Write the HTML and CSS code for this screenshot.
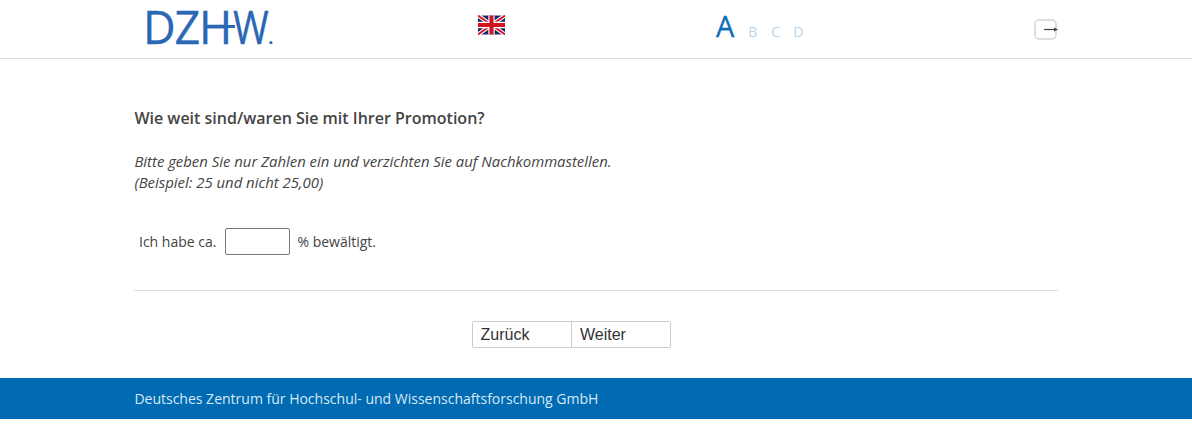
FILE: index.html
```html
<!DOCTYPE html>
<html lang="de">
<head>
<meta charset="utf-8">
<title>DZHW</title>
<link rel="stylesheet" href="styles.css">
</head>
<body>
<header class="header">
  <div class="wrap header-row">
    <div class="logo-box">
      <div class="logo" aria-label="DZHW">DZH<span class="logo-w">W</span><span class="logo-dot">.</span><span class="logo-bar"></span></div>
    </div>
    <svg class="flag" viewBox="0 0 60 42" width="27" height="20" aria-label="English">
      <rect width="60" height="42" fill="#17216a"/>
      <path d="M0 0L60 42M60 0L0 42" stroke="#fff" stroke-width="9"/>
      <path d="M0 0L60 42M60 0L0 42" stroke="#d3121f" stroke-width="4"/>
      <path d="M30 0V42M0 21H60" stroke="#fff" stroke-width="14"/>
      <path d="M30 0V42M0 21H60" stroke="#d3121f" stroke-width="9"/>
    </svg>
    <div class="steps">
      <span class="step-active">A</span>
      <span class="step">B</span>
      <span class="step">C</span>
      <span class="step">D</span>
    </div>
    <svg class="exit" viewBox="0 0 24 22" width="24" height="22" aria-label="Abmelden">
      <rect x="1" y="1" width="21" height="19" rx="4" fill="#fff" stroke="#d4d4d4" stroke-width="1.5"/>
      <path d="M10 10.5H21" stroke="#444" stroke-width="1.2"/>
      <path d="M20 8.5L24 10.5L20 12.5Z" fill="#444"/>
    </svg>
  </div>
</header>
<main class="wrap main">
  <h1 class="question">Wie weit sind/waren Sie mit Ihrer Promotion?</h1>
  <p class="hint">Bitte geben Sie nur Zahlen ein und verzichten Sie auf Nachkommastellen.<br>(Beispiel: 25 und nicht 25,00)</p>
  <div class="answer">
    <label for="pct">Ich habe ca.</label>
    <input id="pct" class="field" type="text">
    <span>% bewältigt.</span>
  </div>
  <hr class="rule">
  <div class="nav">
    <div class="btn-group">
      <button class="btn" type="button">Zurück</button>
      <button class="btn" type="button">Weiter</button>
    </div>
  </div>
</main>
<footer class="footer">
  <div class="wrap footer-text">Deutsches Zentrum für Hochschul- und Wissenschaftsforschung GmbH</div>
</footer>
</body>
</html>
```
FILE: styles.css
```css
* { box-sizing: border-box; }
html, body { margin: 0; padding: 0; background: #fff; }
body { font-family: "Open Sans", sans-serif; font-size: 14px; color: #444; }
.wrap { width: 924px; margin: 0 auto; }
.header { height: 59px; border-bottom: 1px solid #ddd; }
.header-row { display: flex; align-items: flex-start; height: 58px; }
.logo-box { width: 344px; padding-left: 9px; }
.logo {
  position: relative; display: inline-block;
  font-family: "Open Sans", sans-serif; font-weight: 400;
  font-size: 45px; line-height: 54px; letter-spacing: -1.2px;
  color: #2a67b5; white-space: nowrap; -webkit-text-stroke: 0.3px #2a67b5;
}
.logo-w { display: inline-block; margin-left: 2px; letter-spacing: 0; transform: scaleX(0.86); transform-origin: left; margin-right: -6px; }
.logo-dot { font-size: 16px; font-weight: 700; letter-spacing: 0; }
.logo-bar { position: absolute; left: 72px; top: 25px; width: 20px; height: 3px; background: #2a67b5; }
.flag { margin-top: 15px; display: block; }
.steps { margin-left: 211px; display: flex; align-items: baseline; gap: 15px; height: 58px; padding-top: 6px; color: #b9d5ea; font-size: 14px; }
.step-active { font-size: 29px; line-height: 40px; color: #0a6db7; margin-right: -1px; -webkit-text-stroke: 0.3px #0a6db7; }
.step { line-height: 40px; width: 8px; }
.step:last-child { margin-left: -1px; }
.exit { margin-left: auto; margin-top: 19px; margin-right: 0; display: block; }
.main { height: 319px; padding-top: 49px; }
.question { margin: 0; padding-left: 0.4px; font-size: 16px; line-height: 20px; font-weight: 600; color: #444; }
.hint { margin: 23px 0 0; padding-left: 0.4px; font-size: 14.88px; line-height: 21px; font-style: italic; color: #444; }
.answer { margin-top: 35px; padding-left: 5px; display: flex; align-items: center; height: 27px; }
.field { width: 65px; height: 27px; margin: 0 7px 0 9px; border: 1px solid #767676; border-radius: 2px; background: #fff; }
.rule { margin: 35px 0 0; border: 0; border-top: 1px solid #ddd; }
.nav { margin-top: 30px; padding-left: 338px; }
.btn-group { display: flex; width: 199px; height: 27px; border: 1px solid #ccc; border-radius: 2px; }
.btn {
  height: 25px; padding: 0 0 0 7.5px; border: 0; background: #fff; text-align: left;
  font-family: "Liberation Sans", Arial, sans-serif; font-size: 16px; color: #333;
}
.btn:first-child { width: 98px; }
.btn + .btn { width: 99px; padding-left: 8px; border-left: 1px solid #ccc; }
.footer { height: 41px; background: #006bb3; color: #d8e8f4; font-size: 14px; line-height: 41px; }
.footer-text { padding-left: 0.4px; }
```
